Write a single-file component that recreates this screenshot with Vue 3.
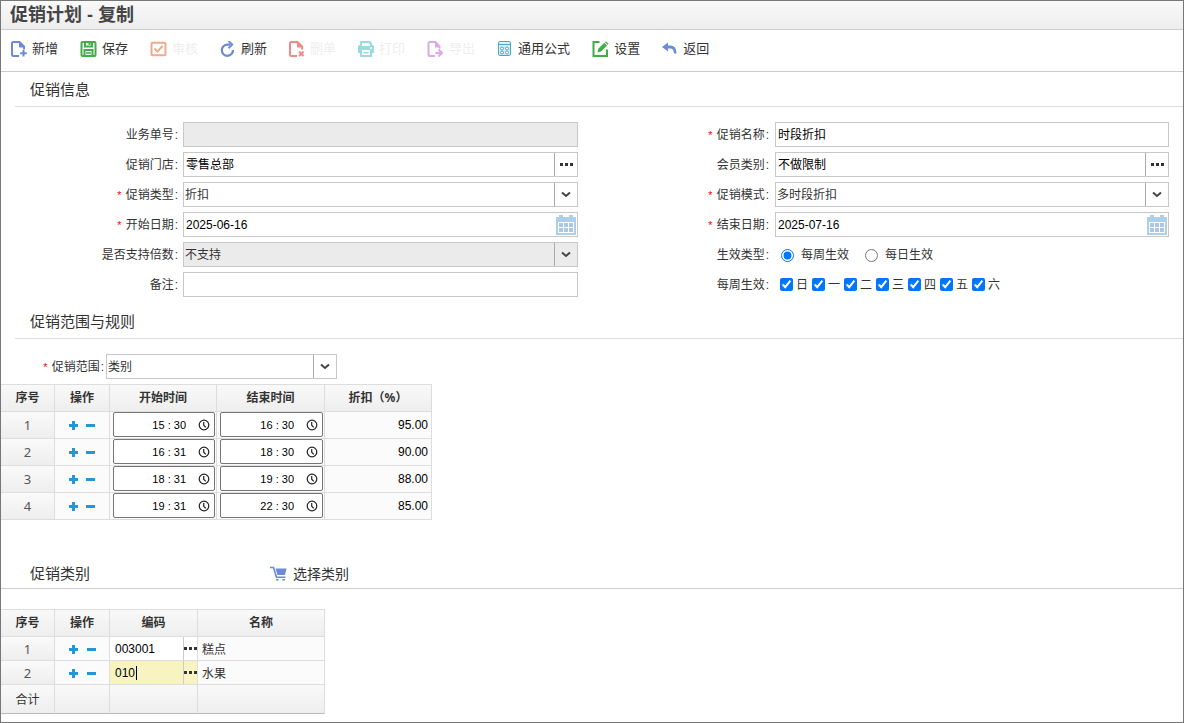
<script setup>
import { reactive, ref } from 'vue'

const tools = [
  { icon: 'new', text: '新增' },
  { icon: 'save', text: '保存', wide: true },
  { icon: 'audit', text: '审核', wide: true, disabled: true },
  { icon: 'refresh', text: '刷新' },
  { icon: 'delete', text: '删单', disabled: true },
  { icon: 'print', text: '打印', disabled: true },
  { icon: 'export', text: '导出', wide: true, disabled: true },
  { icon: 'formula', text: '通用公式' },
  { icon: 'settings', text: '设置', wide: true },
  { icon: 'back', text: '返回' },
]

const leftFields = reactive([
  { id: 'bill', label: '业务单号', kind: 'text', value: '', disabled: true },
  { id: 'store', label: '促销门店', kind: 'lookup', value: '零售总部' },
  { id: 'type', label: '促销类型', kind: 'select', value: '折扣', required: true },
  { id: 'start', label: '开始日期', kind: 'date', value: '2025-06-16', required: true },
  { id: 'multiple', label: '是否支持倍数', kind: 'select', value: '不支持', disabled: true },
  { id: 'remark', label: '备注', kind: 'text', value: '' },
])
const rightFields = reactive([
  { id: 'name', label: '促销名称', kind: 'text', value: '时段折扣', required: true },
  { id: 'member', label: '会员类别', kind: 'lookup', value: '不做限制' },
  { id: 'mode', label: '促销模式', kind: 'select', value: '多时段折扣', required: true },
  { id: 'end', label: '结束日期', kind: 'date', value: '2025-07-16', required: true },
  { id: 'effect', label: '生效类型', kind: 'radio' },
  { id: 'week', label: '每周生效', kind: 'days' },
])
const columns = [leftFields, rightFields]

const effect = ref('每周生效')
const effects = ['每周生效', '每日生效']
const days = reactive(['日', '一', '二', '三', '四', '五', '六'].map((name) => ({ name, on: true })))

const periods = reactive([
  { start: '15 : 30', end: '16 : 30', rate: '95.00' },
  { start: '16 : 31', end: '18 : 30', rate: '90.00' },
  { start: '18 : 31', end: '19 : 30', rate: '88.00' },
  { start: '19 : 31', end: '22 : 30', rate: '85.00' },
])
const categories = reactive([
  { code: '003001', name: '糕点' },
  { code: '010', name: '水果', active: true },
])
</script>

<template>
  <div class="page">
    <header class="titlebar"><h1>促销计划 - 复制</h1></header>

    <nav class="toolbar">
      <button v-for="t in tools" :key="t.icon" type="button" class="tool" :class="{ wide: t.wide }" :disabled="t.disabled">
        <svg viewBox="0 0 16 16" aria-hidden="true">
          <g v-if="t.icon === 'new'" fill="none" stroke="#6b8ad8" stroke-width="2">
            <path d="M8 15H2.2Q1 15 1 13.800V2.200Q1 1 2.200 1H8.500L13 5.500V8.500" />
            <path d="M8 0.500L13.500 6.500H8Z" fill="#6b8ad8" stroke="none" />
            <path d="M12.500 9V15.500M9.200 12.200H15.800" />
          </g>
          <g v-else-if="t.icon === 'save'" fill="none" stroke="#43ab47" stroke-width="2">
            <rect x="1" y="1" width="14" height="14" rx="1" />
            <path d="M4.500 1V5.500H11.500V1M9 2V4" />
            <path d="M4 15V9H12V15" />
            <path d="M5.500 12H10.500" stroke-width="1.500" />
          </g>
          <g v-else-if="t.icon === 'audit'" fill="none" stroke="#f3a987" stroke-width="2">
            <rect x="1" y="1.800" width="14" height="12.500" rx="1" />
            <path d="M4 7.500L7 10.500L12 5" />
          </g>
          <g v-else-if="t.icon === 'refresh'" fill="none" stroke="#6b8ad8" stroke-width="2.200">
            <path d="M13 9A5.600 5.600 0 1 1 7.500 3.600H10.500" />
            <path d="M8.500 0L12.200 3.600L8.500 7.200" stroke-width="1.900" />
          </g>
          <g v-else-if="t.icon === 'delete'" fill="none" stroke="#f08a84" stroke-width="2">
            <path d="M8 15H2.200Q1 15 1 13.800V2.200Q1 1 2.200 1H8.500L13 5.500V8.500" />
            <path d="M8 0.500L13.500 6.500H8Z" fill="#f08a84" stroke="none" />
            <path d="M10 10.500L14.500 15M14.500 10.500L10 15" />
          </g>
          <g v-else-if="t.icon === 'print'">
            <path fill="#98dbe1" d="M3 0H12L14 2V5H2V1Q2 0 3 0ZM1.500 4H14.500Q16 4 16 5.500V12H14V15Q14 16 13 16H3Q2 16 2 15V12H0V5.500Q0 4 1.500 4Z" />
            <path fill="#fff" d="M4 2H11V3H12V5H4ZM4 9H12V14H4Z" />
            <path fill="#98dbe1" d="M5.500 11H10.500V12.500H5.500Z" />
            <circle cx="13" cy="7" r="1" fill="#fff" />
          </g>
          <g v-else-if="t.icon === 'export'" fill="none" stroke="#dda9e6" stroke-width="2">
            <path d="M7.500 15H2.200Q1 15 1 13.800V2.200Q1 1 2.200 1H8L12 5.500V7.500" />
            <path d="M7.500 0.500L12.500 6.500H7.500Z" fill="#dda9e6" stroke="none" />
            <path d="M8 12H14M11 8.500L14.500 12L11 15.500" />
          </g>
          <g v-else-if="t.icon === 'formula'" fill="none" stroke="#3fa9dc">
            <rect x="1.500" y="0.500" width="12" height="14" rx="1.500" fill="#d9f0fb" />
            <path d="M2 3.500H13" />
            <g fill="#fff">
              <circle cx="5" cy="7.500" r="1.500" /><circle cx="10" cy="7.500" r="1.500" />
              <circle cx="5" cy="11.500" r="1.500" /><circle cx="10" cy="11.500" r="1.500" />
            </g>
          </g>
          <g v-else-if="t.icon === 'settings'">
            <path fill="none" stroke="#43ab47" stroke-width="2" d="M7 1H1V15H14.500V8.500" />
            <path fill="#43ab47" d="M5 11.500L5.800 7.800L11.800 1.800L14.500 4.500L8.500 10.500ZM12.500 1.200L13.500 0.200L16 2.700L15.100 3.700Z" />
          </g>
          <g v-else>
            <path fill="#6b8ad8" d="M0 6L6 1.500V4.500H9Q14.500 5 14.500 12.500H12Q11.500 7.500 8.500 7.500H6V10.500Z" />
          </g>
        </svg>
        <span>{{ t.text }}</span>
      </button>
    </nav>

    <section>
      <h2 class="section-title">促销信息</h2>
      <div class="form">
        <div v-for="(fields, c) in columns" :key="c" class="form-col">
          <div v-for="f in fields" :key="f.id" class="row">
            <component :is="f.kind === 'radio' || f.kind === 'days' ? 'span' : 'label'" :id="'l-' + f.id" class="label" :for="f.kind === 'radio' || f.kind === 'days' ? null : f.id">
              <i v-if="f.required">*</i>{{ f.label }}<b>:</b>
            </component>
            <div v-if="f.kind === 'radio'" class="radios" role="radiogroup" aria-labelledby="l-effect">
              <label v-for="e in effects" :key="e"><input v-model="effect" type="radio" name="effect" :value="e" /><span>{{ e }}</span></label>
            </div>
            <div v-else-if="f.kind === 'days'" class="days" role="group" aria-labelledby="l-week">
              <label v-for="d in days" :key="d.name"><input v-model="d.on" type="checkbox" /><span>{{ d.name }}</span></label>
            </div>
            <div v-else class="box" :class="{ off: f.disabled }">
              <template v-if="f.kind === 'select'">
                <select :id="f.id" v-model="f.value" :disabled="f.disabled"><option>{{ f.value }}</option></select>
                <span class="end"><svg class="chevron" viewBox="0 0 10 7"><path d="M1 1.500L5 5L9 1.500" /></svg></span>
              </template>
              <template v-else>
                <input :id="f.id" v-model="f.value" type="text" :disabled="f.disabled" />
                <button v-if="f.kind === 'lookup'" type="button" class="end" :aria-label="'选择' + f.label">
                  <svg class="dots" viewBox="0 0 13 3"><path d="M0 0H3V3H0ZM5 0H8V3H5ZM10 0H13V3H10Z" /></svg>
                </button>
                <button v-if="f.kind === 'date'" type="button" class="calendar" :aria-label="'选择' + f.label">
                  <svg viewBox="0 0 20 20">
                    <path fill="#acd0ea" d="M3 0H7V2H13V0H17V2H20V20H0V2H3Z" />
                    <path fill="#fff" d="M2 7H18V18H2Z" />
                    <path fill="#a9c8e4" d="M3 8H7V12H3ZM8 8H12V12H8ZM13 8H17V12H13ZM3 13H7V17H3ZM8 13H12V17H8ZM13 13H17V17H13Z" />
                  </svg>
                </button>
              </template>
            </div>
          </div>
        </div>
      </div>
    </section>

    <section>
      <h2 class="section-title">促销范围与规则</h2>
      <div class="scope">
        <label class="label" for="scope"><i>*</i>促销范围<b>:</b></label>
        <div class="box">
          <select id="scope"><option>类别</option></select>
          <span class="end"><svg class="chevron" viewBox="0 0 10 7"><path d="M1 1.500L5 5L9 1.500" /></svg></span>
        </div>
      </div>
      <table class="periods">
        <colgroup><col class="c-no" /><col class="c-op" /><col class="c-start" /><col class="c-end" /><col class="c-rate" /></colgroup>
        <thead>
          <tr><th>序号</th><th>操作</th><th>开始时间</th><th>结束时间</th><th>折扣（%）</th></tr>
        </thead>
        <tbody>
          <tr v-for="(p, i) in periods" :key="i">
            <td class="no">{{ i + 1 }}</td>
            <td>
              <div class="ops">
                <button type="button" aria-label="添加行"><svg viewBox="0 0 9 9"><path d="M3 0H6V3H9V6H6V9H3V6H0V3H3Z" /></svg></button>
                <button type="button" aria-label="删除行"><svg viewBox="0 0 9 9"><path d="M0 3H9V6H0Z" /></svg></button>
              </div>
            </td>
            <td v-for="k in ['start', 'end']" :key="k" class="top">
              <div class="time">
                <input v-model="p[k]" type="text" :aria-label="k === 'start' ? '开始时间' : '结束时间'" />
                <svg viewBox="0 0 12 12" aria-hidden="true"><circle cx="6" cy="6" r="4.800" /><path d="M5.700 3V6.200L7.800 8.300" /></svg>
              </div>
            </td>
            <td class="top"><input v-model="p.rate" class="rate" type="text" aria-label="折扣" /></td>
          </tr>
        </tbody>
      </table>
    </section>

    <section class="category">
      <div class="category-head">
        <h2>促销类别</h2>
        <button type="button" class="pick">
          <svg viewBox="0 0 18 16" aria-hidden="true">
            <path fill="none" stroke="#6b8ad8" stroke-width="1.600" d="M0 1.500H3.500L6.500 11.200H15.500" />
            <path fill="#6b8ad8" d="M5.500 2.500H16.500L15 9H7.500ZM6 13H8.500V14.500H6ZM12.500 13H15V14.500H12.500Z" />
          </svg>
          <span>选择类别</span>
        </button>
      </div>
      <table class="cats">
        <colgroup><col class="c-no" /><col class="c-op" /><col class="c-code" /><col class="c-name" /></colgroup>
        <thead>
          <tr><th>序号</th><th>操作</th><th>编码</th><th>名称</th></tr>
        </thead>
        <tbody>
          <tr v-for="(c, i) in categories" :key="i">
            <td class="no">{{ i + 1 }}</td>
            <td>
              <div class="ops">
                <button type="button" aria-label="添加行"><svg viewBox="0 0 9 9"><path d="M3 0H6V3H9V6H6V9H3V6H0V3H3Z" /></svg></button>
                <button type="button" aria-label="删除行"><svg viewBox="0 0 9 9"><path d="M0 3H9V6H0Z" /></svg></button>
              </div>
            </td>
            <td>
              <div class="code" :class="{ active: c.active }">
                <input v-model="c.code" type="text" aria-label="编码" />
                <span v-if="c.active" class="caret"></span>
                <button type="button" aria-label="选择编码"><svg class="dots" viewBox="0 0 13 3"><path d="M0 0H3V3H0ZM5 0H8V3H5ZM10 0H13V3H10Z" /></svg></button>
              </div>
            </td>
            <td class="name">{{ c.name }}</td>
          </tr>
        </tbody>
        <tfoot>
          <tr><td>合计</td><td></td><td></td><td></td></tr>
        </tfoot>
      </table>
    </section>
  </div>
</template>

<style>
body { background: #fff; }
</style>

<style scoped>
* { box-sizing: border-box; }
.page {
  min-height: 100vh;
  border: 1px solid #777;
  color: #333;
  font: 12px/18px "Liberation Sans", "Noto Sans CJK SC", sans-serif;
}
button, input, select { font: inherit; color: inherit; }
button { border: 0; padding: 0; background: none; cursor: pointer; }
h1, h2 { margin: 0; }
svg { display: block; }

.titlebar {
  height: 29px;
  padding-left: 9px;
  border-bottom: 1px solid #ccc;
  background: linear-gradient(#f9f9f9, #ededed);
}
h1 { font-size: 18px; line-height: 28px; color: #444; }

.toolbar {
  display: flex;
  gap: 22px;
  height: 42px;
  padding: 0 10px 4px;
  border-bottom: 1px solid #ccc;
}
.tool { display: flex; align-items: center; gap: 5px; font-size: 13px; white-space: nowrap; }
.tool svg { width: 16px; height: 16px; }
.tool.wide svg { width: 17px; }
.tool:disabled { color: #eee; cursor: default; }

.section-title {
  height: 35px;
  margin-left: 14px;
  padding-left: 15px;
  border-bottom: 1px solid #ddd;
  font-size: 15px;
  font-weight: 400;
  line-height: 35px;
}
.form { display: grid; grid-template-columns: 1fr 1fr; padding: 15px 0 7px; }
.form-col { display: grid; gap: 5px; }
.row { display: grid; grid-template-columns: 182px 1fr; grid-auto-rows: 25px; padding-right: 14px; }
.form-col + .form-col .row { grid-template-columns: 183px 1fr; }
.label { padding-right: 5px; text-align: right; line-height: 27px; white-space: nowrap; }
.form-col + .form-col .label { padding-right: 6px; }
.label i { margin-right: 3px; color: #f00; font: 11px/18px "Liberation Mono", monospace; }
.label b { padding-left: 1px; font-weight: 400; }
.box { display: flex; height: 25px; border: 1px solid #c8c8c8; background: #fff; }
.box input, .box select {
  flex: 1;
  min-width: 0;
  border: 0;
  outline: 0;
  padding: 0 2px;
  background: none;
  color: #000;
  appearance: none;
  border-radius: 0;
  opacity: 1;
}
.box select { padding: 0 1px; color: #333; }
.box.off { background: #ebebeb; }
.end {
  display: flex;
  align-items: center;
  justify-content: center;
  width: 23px;
  border-left: 1px solid #aaa;
}
.dots { width: 13px; height: 3px; fill: #333; }
.chevron { width: 10px; height: 7px; fill: none; stroke: #444; stroke-width: 2; }
.calendar { padding: 0 1px; }
.calendar svg { width: 20px; height: 20px; }

.radios, .days { display: flex; align-items: center; }
.radios { gap: 16px; padding: 1px 0 0 6px; }
.days { gap: 4px; padding-left: 5px; }
.radios label, .days label { display: flex; align-items: center; }
.radios label { gap: 7px; }
.days label { gap: 3px; }
.radios input, .days input { width: 13px; height: 13px; margin: 0; }

.scope { display: grid; grid-template-columns: 105px 231px; grid-auto-rows: 25px; padding: 15px 0 5px; }
.scope .label { padding-right: 2px; }

table { border-spacing: 0; table-layout: fixed; border-top: 1px solid #ddd; }
.periods { width: 431px; }
.cats { width: 324px; }
.c-no { width: 54px; }
.c-op { width: 55px; }
.c-start, .c-rate { width: 107px; }
.c-end { width: 108px; }
.c-code { width: 88px; }
.c-name { width: 127px; }
th, td { height: 27px; padding: 0; border: solid #ddd; border-width: 0 1px 1px 0; background: #fbfbfb; }
th { background: linear-gradient(#f9f9f9, #eee); font: 700 12px/18px "Noto Sans", "Noto Sans CJK SC", sans-serif; }
.top { vertical-align: top; }
.no { background: linear-gradient(#fafafa, #eee); color: #555; font: 13px/18px "Noto Sans", sans-serif; text-align: center; }
.ops { display: flex; gap: 8px; padding-left: 14px; }
.ops svg { width: 9px; height: 9px; fill: #2496dc; }
.time {
  display: flex;
  align-items: center;
  height: 25px;
  margin: 0 1px 0 3px;
  padding-right: 4px;
  border: 1px solid #767676;
  border-radius: 2px;
  background: #fff;
}
.time input { flex: 1; min-width: 0; border: 0; padding: 0 12px 0 0; background: none; color: #000; font-size: 11px; text-align: right; outline: 0; }
.time svg { width: 12px; height: 12px; fill: none; stroke: #222; stroke-width: 1.200; }
.rate { display: block; width: 100%; height: 25px; border: 0; padding: 0 3px; background: none; color: #000; text-align: right; }

.category { padding-top: 34px; }
.category-head {
  display: flex;
  align-items: center;
  height: 35px;
  margin-bottom: 20px;
  padding: 5px 0 0 29px;
  border-bottom: 1px solid #ccc;
}
.category-head h2 { flex: 0 0 240px; font-size: 15px; font-weight: 400; }
.pick { display: flex; align-items: center; gap: 5px; font-size: 14px; }
.pick svg { width: 18px; height: 16px; }
.cats tbody td { height: 24px; }
.cats tbody .ops { gap: 9px; padding-top: 1px; }
.cats tfoot td { height: 29px; padding-top: 2px; border-bottom-color: #bbb; background: linear-gradient(#f9f9f9, #eee); text-align: center; }
.cats tbody .name { padding: 2px 0 0 4px; }
.code { position: relative; display: flex; height: 23px; background: #fff; }
.code input { flex: 1; min-width: 0; border: 0; padding: 0 5px; background: none; color: #000; outline: 0; }
.code button { width: 14px; border-left: 1px solid #ccc; }
.code.active { background: #f7f4c2; }
.caret { position: absolute; left: 26px; top: 5px; width: 1px; height: 14px; background: #000; }
</style>
